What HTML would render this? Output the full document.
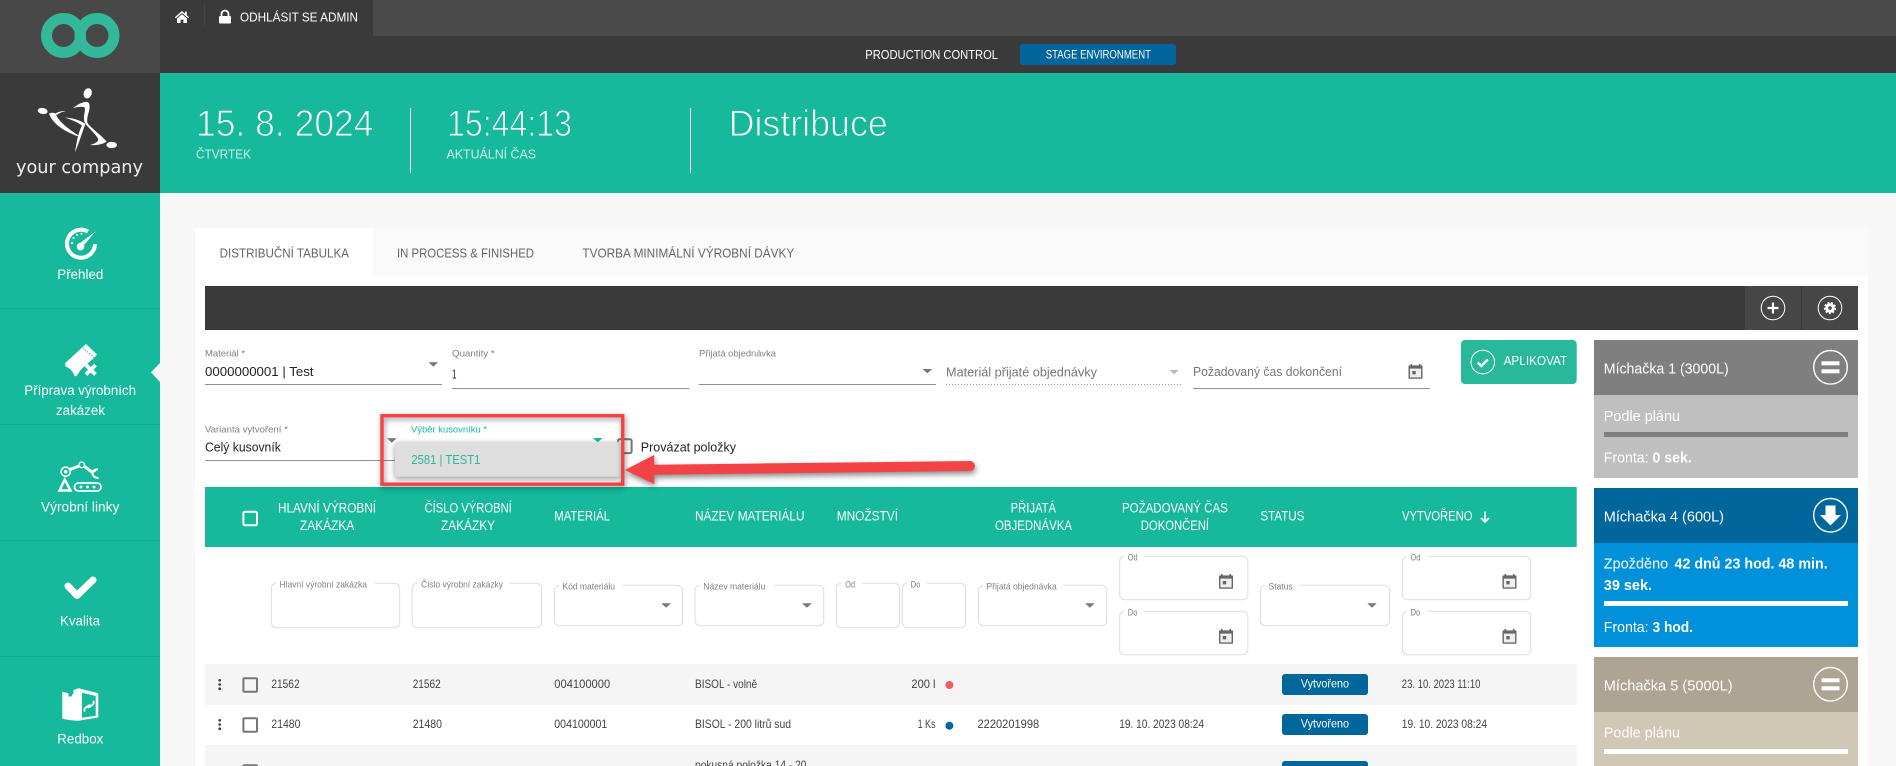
<!DOCTYPE html>
<html lang="cs"><head><meta charset="utf-8"><title>Distribuce</title>
<style>
html,body{margin:0;padding:0;background:#f7f7f7;width:1896px;height:766px;overflow:hidden}
svg{display:block}
text{font-family:"Liberation Sans",sans-serif;white-space:pre}
.w{fill:#fff}
.thin{fill:#fff;stroke:#16b99b;stroke-width:1}
.sub{fill:#cdeee6}
.lb{fill:#808080;font-size:9.5px}
.in{fill:#222;font-size:13px}
.mut{fill:#777;font-size:13px}
.th{fill:#fff;font-size:13.5px}
.td{fill:#444;font-size:12px}
.tab{fill:#666;font-size:12.5px}
.nav{fill:#fff;font-size:13.5px}
.m{fill:#fff;font-size:14.5px}
.b{font-weight:700}
.box{fill:#fff;stroke:#e2e2e2;stroke-width:1.2}
.arr{fill:#777}
.cb{fill:none;stroke:#777;stroke-width:2}
</style></head><body>
<svg xmlns="http://www.w3.org/2000/svg" width="1896" height="766" viewBox="0 0 1896 766">
<defs>
<g id="cal"><path d="M2 0h1.6v1.4h6.8V0H12v1.4h1.2A.8.8 0 0 1 14 2.2V14a.8.8 0 0 1-.8.8H.8A.8.8 0 0 1 0 14V2.2a.8.8 0 0 1 .8-.8H2z" fill="#666"/><rect x="1.4" y="4.6" width="11.2" height="8.8" fill="#eee"/><rect x="3.8" y="7" width="3.4" height="3.4" fill="#666"/></g>
</defs>
<rect width="1896" height="766" fill="#f7f7f7"/>
<!-- top -->
<rect x="0" y="0" width="160" height="73" fill="#484848"/>
<rect x="160" y="0" width="1736" height="36" fill="#4a4a4a"/>
<rect x="160" y="36" width="1736" height="37" fill="#3a3a3a"/>
<rect x="160" y="0" width="213" height="36" fill="#3a3a3a"/>
<circle cx="63.5" cy="35.5" r="17" fill="none" stroke="#33b899" stroke-width="11"/>
<circle cx="97" cy="35.5" r="17" fill="none" stroke="#33b899" stroke-width="11"/>
<path d="M182 11L174.8 17.2l.9 1L182 13l6.300 5.200.9-1L186.800 15.200V11.600h-1.800v2z" fill="#fff"/>
<path d="M177 18.400L182 14.200l5 4.200V23h-3.600v-3.400h-2.800V23H177z" fill="#fff"/>
<rect x="204" y="3" width="1" height="24" fill="#444"/>
<rect x="219" y="16" width="12" height="7.500" rx="1" fill="#fff"/>
<path d="M221.500 17v-3a3.500 3.500 0 0 1 7 0v3" fill="none" stroke="#fff" stroke-width="1.800"/>
<text x="240" y="21.500" font-size="12.500" class="w" textLength="118" lengthAdjust="spacingAndGlyphs">ODHLÁSIT SE ADMIN</text>
<text x="865.300" y="59" font-size="12.500" class="w" textLength="132.700" lengthAdjust="spacingAndGlyphs">PRODUCTION CONTROL</text>
<rect x="1020" y="44" width="156" height="21" rx="2.500" fill="#00669c"/>
<text x="1045.700" y="58.300" font-size="11.500" class="w" textLength="105.300" lengthAdjust="spacingAndGlyphs">STAGE ENVIRONMENT</text>
<!-- brand -->
<rect x="0" y="73" width="160" height="120" fill="#3a3a3a"/>
<rect x="160" y="73" width="1736" height="120" fill="#16b99b"/>
<g fill="#fff">
<ellipse cx="87.700" cy="93.300" rx="4" ry="5.200" transform="rotate(20 87.700 93.300)"/>
<ellipse cx="42.700" cy="111" rx="5" ry="3" transform="rotate(10 42.700 111)"/>
<ellipse cx="111.700" cy="145" rx="5.300" ry="3.100"/>
<path d="M49 113.500C53 125 67 133 81.500 137.500C71 130.500 59 123 55.500 113.500C53 112.500 51 112.500 49 113.500Z"/>
<path d="M73 108C78 104 84 101.500 87.500 102C90 103 90 107 89 111C88 115 86.500 119 87.500 123C92 129 101 135 106.500 141.500C103 144.500 96 145.500 90 145C95.500 143.500 99 141.500 98 138.500C94 132 87 127 84.500 122C83 118 85 112 85 108.500C85 106 79 106.500 73 108Z"/>
<path d="M65 117.500C73 118 81 120.500 85.500 124C82 132 79.500 142 75 152.500C76.500 142 78.500 132 82 125.500C77 122 71 119.500 65 117.500Z"/>
<path d="M55 114C58 111.500 62 111 66 111C62 112 59 113 57 115Z"/>
</g>
<text x="16" y="173" font-size="18" fill="#eee" style="font-family:'DejaVu Sans',sans-serif" textLength="127" lengthAdjust="spacingAndGlyphs">your company</text>
<text x="196" y="136" font-size="37" class="thin" textLength="177.500" lengthAdjust="spacingAndGlyphs">15. 8. 2024</text>
<text x="196" y="158.300" font-size="13" class="sub" textLength="55" lengthAdjust="spacingAndGlyphs">ČTVRTEK</text>
<rect x="410" y="108" width="1" height="65" fill="#fff"/>
<text x="447" y="136" font-size="37" class="thin" textLength="125" lengthAdjust="spacingAndGlyphs">15:44:13</text>
<text x="446.500" y="158.300" font-size="13" class="sub" textLength="89.500" lengthAdjust="spacingAndGlyphs">AKTUÁLNÍ ČAS</text>
<rect x="690" y="108" width="1" height="65" fill="#fff"/>
<text x="728.600" y="136" font-size="37" class="thin" textLength="159.200" lengthAdjust="spacingAndGlyphs">Distribuce</text>
<!-- sidebar -->
<rect x="0" y="193" width="160" height="573" fill="#16b99b"/>
<g fill="#12a98e"><rect y="308" width="160" height="1"/><rect y="424" width="160" height="1"/><rect y="540" width="160" height="1"/><rect y="656" width="160" height="1"/></g>
<polygon points="160,363 151,372.300 160,382" fill="#f7f7f7"/>
<!-- gauge -->
<path d="M88 231.600A14 14 0 1 0 95 244" fill="none" stroke="#fff" stroke-width="4" stroke-linecap="butt"/>
<path d="M96 231L84 245a3.800 3.800 0 1 1-3.500-2.200z" fill="#fff"/>
<g fill="#fff"><circle cx="72" cy="243" r="1.100"/><circle cx="73.500" cy="238" r="1.100"/><circle cx="77" cy="234.800" r="1.100"/><circle cx="81.500" cy="233.800" r="1.100"/></g>
<text x="57.300" y="279" class="nav" textLength="46" lengthAdjust="spacingAndGlyphs">Přehled</text>
<!-- ticket -->
<path d="M65 363.300L80 349.500 86 344l11 10.500-3 3.500-8 7-5 4.500-4.500 6.500-2 .2C73.500 372 70 368 65.500 366.500z" fill="#fff"/>
<path d="M83 347.800L94 357.500" stroke="#16b99b" stroke-width="1" stroke-dasharray="1.500 1.200" fill="none"/>
<path d="M86 365l9.500 9.500M95.500 365L86 374.500" stroke="#16b99b" stroke-width="7" fill="none"/>
<path d="M86 365l9.500 9.500M95.500 365L86 374.500" stroke="#fff" stroke-width="3.800" fill="none"/>
<text x="24.300" y="395" class="nav" textLength="111.700" lengthAdjust="spacingAndGlyphs">Příprava výrobních</text>
<text x="56" y="415" class="nav" textLength="49" lengthAdjust="spacingAndGlyphs">zakázek</text>
<!-- robot -->
<g fill="none" stroke="#fff">
<circle cx="65.700" cy="471.700" r="4.600" stroke-width="1.500"/><circle cx="65.700" cy="471.700" r="1.800" fill="#fff" stroke="none"/>
<circle cx="81.700" cy="464.800" r="2.800" stroke-width="1.300"/>
<path d="M70 469.500L79 466M84.500 466.500L92 472" stroke-width="3"/>
<path d="M98 469.500c-3-.5-6 1.500-5.500 4.500 1 3 3.500 4 6 4M96 470l-3 2" stroke-width="2"/>
<path d="M64.800 479.500L59.500 490.500H70.500z" stroke-width="2.400"/>
<rect x="74.500" y="483" width="26.500" height="8" rx="4" stroke-width="1.800"/>
</g>
<g fill="#fff"><circle cx="81" cy="487" r="1.500"/><circle cx="87.500" cy="487" r="1.500"/><circle cx="94" cy="487" r="1.500"/></g>
<text x="41" y="511.700" class="nav" textLength="78.300" lengthAdjust="spacingAndGlyphs">Výrobní linky</text>
<!-- check -->
<path d="M68 586L77 595.500L93 580" fill="none" stroke="#fff" stroke-width="7" stroke-linecap="round" stroke-linejoin="round"/>
<text x="60" y="625.700" class="nav" textLength="40" lengthAdjust="spacingAndGlyphs">Kvalita</text>
<!-- redbox -->
<path d="M62.300 691.700L68.500 693.300V696.500H71.500L73.500 692.500V690L78.500 688.300L98.300 693.300V717.500L78.500 720.700C72 720.500 67 720 62.300 718.500z" fill="#fff"/>
<path d="M82 692.800L95.700 696V715.800L82 717.800z" fill="#16b99b"/>
<path d="M85 711.500c-1.500-1.500-.5-3.200 1-4.200l2-1.500c1.500-1 3-.5 3.500.5M93 701c1.500 1.500.5 3.200-1 4.200l-2 1.500c-1.500 1-3 .5-3.500-.5" fill="none" stroke="#fff" stroke-width="1.800"/>
<text x="57.300" y="743.300" class="nav" textLength="46" lengthAdjust="spacingAndGlyphs">Redbox</text>

<!-- card -->
<rect x="373" y="228" width="1495" height="48" fill="#fafafa"/>
<rect x="195" y="228" width="178" height="538" fill="#fff"/>
<rect x="195" y="276" width="1673" height="490" fill="#fff"/>
<text x="219.600" y="257.300" class="tab" textLength="129.400" lengthAdjust="spacingAndGlyphs">DISTRIBUČNÍ TABULKA</text>
<text x="397" y="257.300" class="tab" textLength="137" lengthAdjust="spacingAndGlyphs">IN PROCESS &amp; FINISHED</text>
<text x="582.400" y="257.300" class="tab" textLength="211.900" lengthAdjust="spacingAndGlyphs">TVORBA MINIMÁLNÍ VÝROBNÍ DÁVKY</text>
<rect x="205" y="286" width="1653" height="44" fill="#3a3a3a"/>
<rect x="1745" y="286" width="56" height="44" fill="#474747"/>
<rect x="1802" y="286" width="56" height="44" rx="2" fill="#474747"/>
<circle cx="1773" cy="308" r="11.800" fill="none" stroke="#fff" stroke-width="1"/>
<path d="M1773 302.500v11M1767.500 308h11" stroke="#fff" stroke-width="2.200"/>
<circle cx="1830" cy="308" r="11.800" fill="none" stroke="#fff" stroke-width="1"/>
<circle cx="1830" cy="308" r="4.800" fill="#fff"/>
<circle cx="1830" cy="308" r="5.300" fill="none" stroke="#fff" stroke-width="1.600" stroke-dasharray="2 1.700"/>
<circle cx="1830" cy="308" r="1.800" fill="#474747"/>

<!-- form row 1 -->
<text x="205" y="356.700" class="lb" textLength="40" lengthAdjust="spacingAndGlyphs">Materiál *</text>
<text x="205" y="376" class="in" textLength="108.500" lengthAdjust="spacingAndGlyphs">0000000001 | Test</text>
<polygon class="arr" points="428.600,362.300 438,362.300 433.300,366.700"/>
<rect x="205" y="384" width="237" height="1" fill="#8f8f8f"/>
<text x="452" y="356.700" class="lb" textLength="42.700" lengthAdjust="spacingAndGlyphs">Quantity *</text>
<text x="452" y="378.300" class="in" textLength="4.500" lengthAdjust="spacingAndGlyphs">1</text>
<rect x="452" y="388" width="237" height="1" fill="#8f8f8f"/>
<text x="699" y="356.700" class="lb" textLength="77" lengthAdjust="spacingAndGlyphs">Přijatá objednávka</text>
<polygon class="arr" points="922.400,369 932.200,369 927.300,373.300"/>
<rect x="699" y="384" width="237" height="1" fill="#8f8f8f"/>
<text x="946" y="376.700" class="mut" textLength="151" lengthAdjust="spacingAndGlyphs">Materiál přijaté objednávky</text>
<polygon points="1169.400,370 1178.800,370 1174.100,374.300" fill="#bbb"/>
<line x1="946" y1="384.500" x2="1183" y2="384.500" stroke="#999" stroke-width="1" stroke-dasharray="1 2"/>
<text x="1193" y="376" class="mut" textLength="149" lengthAdjust="spacingAndGlyphs">Požadovaný čas dokončení</text>
<use href="#cal" x="1408.500" y="364"/>
<rect x="1193" y="388" width="237" height="1" fill="#8f8f8f"/>
<rect x="1461" y="340" width="115.700" height="44" rx="4" fill="#27b99a"/>
<circle cx="1482.800" cy="362" r="11.800" fill="none" stroke="#fff" stroke-width="1"/>
<path d="M1477.800 362.500l3.500 3.500 6.500-6.500" fill="none" stroke="#fff" stroke-width="2.400"/>
<text x="1503.600" y="365" font-size="13" class="w" textLength="63.600" lengthAdjust="spacingAndGlyphs">APLIKOVAT</text>

<!-- form row 2 -->
<text x="205" y="432.700" class="lb" textLength="82.800" lengthAdjust="spacingAndGlyphs">Varianta vytvoření *</text>
<text x="205" y="451.700" class="in" textLength="75.800" lengthAdjust="spacingAndGlyphs">Celý kusovník</text>
<rect x="205" y="460" width="237" height="1" fill="#8f8f8f"/>
<polygon class="arr" points="387,438.300 396.700,438.300 391.800,442.700"/>
<text x="411" y="432.700" font-size="9.500" fill="#16b99b" textLength="76" lengthAdjust="spacingAndGlyphs">Výběr kusovníku *</text>
<polygon points="593,438 602.500,438 597.700,442.500" fill="#16b99b"/>
<rect x="618" y="439.300" width="13.600" height="13.800" rx="1.500" class="cb"/>
<text x="640.800" y="451.700" class="in" textLength="95.200" lengthAdjust="spacingAndGlyphs">Provázat položky</text>

<!-- table header -->
<rect x="205" y="487" width="1371.700" height="60" fill="#16b99b"/>
<rect x="243.400" y="511.700" width="13.600" height="13.500" rx="1.500" fill="none" stroke="#fff" stroke-width="2"/>
<text x="278" y="512.300" class="th" textLength="98" lengthAdjust="spacingAndGlyphs">HLAVNÍ VÝROBNÍ</text>
<text x="300" y="530" class="th" textLength="54.300" lengthAdjust="spacingAndGlyphs">ZAKÁZKA</text>
<text x="424.500" y="512.300" class="th" textLength="87.300" lengthAdjust="spacingAndGlyphs">ČÍSLO VÝROBNÍ</text>
<text x="441" y="530" class="th" textLength="54" lengthAdjust="spacingAndGlyphs">ZAKÁZKY</text>
<text x="554.300" y="520.500" class="th" textLength="55.700" lengthAdjust="spacingAndGlyphs">MATERIÁL</text>
<text x="695" y="520.500" class="th" textLength="109.500" lengthAdjust="spacingAndGlyphs">NÁZEV MATERIÁLU</text>
<text x="836.700" y="520.500" class="th" textLength="61.300" lengthAdjust="spacingAndGlyphs">MNOŽSTVÍ</text>
<text x="1010.600" y="512.300" class="th" textLength="45.400" lengthAdjust="spacingAndGlyphs">PŘIJATÁ</text>
<text x="995" y="530" class="th" textLength="77" lengthAdjust="spacingAndGlyphs">OBJEDNÁVKA</text>
<text x="1122" y="512.300" class="th" textLength="105.800" lengthAdjust="spacingAndGlyphs">POŽADOVANÝ ČAS</text>
<text x="1140.800" y="530" class="th" textLength="68.200" lengthAdjust="spacingAndGlyphs">DOKONČENÍ</text>
<text x="1260.400" y="520.500" class="th" textLength="44" lengthAdjust="spacingAndGlyphs">STATUS</text>
<text x="1402" y="520.500" class="th" textLength="70.500" lengthAdjust="spacingAndGlyphs">VYTVOŘENO</text>
<path d="M1485 511.500v10M1481 518l4 4 4-4" fill="none" stroke="#fff" stroke-width="1.700"/>

<!-- filters -->
<rect class="box" x="271.400" y="583.300" width="128.200" height="44.400" rx="5"/><rect x="276" y="582" width="99" height="3" fill="#fff"/><text class="lb" x="279.600" y="587.500" textLength="87.400" lengthAdjust="spacingAndGlyphs">Hlavní výrobní zakázka</text>
<rect class="box" x="412.200" y="583.300" width="129.400" height="44.400" rx="5"/><rect x="417" y="582" width="92" height="3" fill="#fff"/><text class="lb" x="421" y="587.500" textLength="82" lengthAdjust="spacingAndGlyphs">Číslo výrobní zakázky</text>
<rect class="box" x="554.300" y="585.300" width="128.100" height="40.400" rx="5"/><rect x="559" y="584" width="63" height="3" fill="#fff"/><text class="lb" x="562.400" y="589.700" textLength="52.600" lengthAdjust="spacingAndGlyphs">Kód materiálu</text>
<polygon class="arr" points="661.200,603.300 671,603.300 666.100,607.700"/>
<rect class="box" x="695" y="585.300" width="128.700" height="40.400" rx="5"/><rect x="700" y="584" width="73" height="3" fill="#fff"/><text class="lb" x="703.300" y="589.700" textLength="62" lengthAdjust="spacingAndGlyphs">Název materiálu</text>
<polygon class="arr" points="802,603.300 811.800,603.300 806.900,607.700"/>
<rect class="box" x="836.300" y="583.300" width="63.300" height="44.400" rx="5"/><rect x="841" y="582" width="21" height="3" fill="#fff"/><text class="lb" x="845.300" y="587.500" textLength="9.700" lengthAdjust="spacingAndGlyphs">Od</text>
<rect class="box" x="902.400" y="583.300" width="63.300" height="44.400" rx="5"/><rect x="907" y="582" width="20" height="3" fill="#fff"/><text class="lb" x="910.600" y="587.500" textLength="9.800" lengthAdjust="spacingAndGlyphs">Do</text>
<rect class="box" x="978.400" y="585.300" width="128.100" height="40.400" rx="5"/><rect x="983" y="584" width="80" height="3" fill="#fff"/><text class="lb" x="986.500" y="589.700" textLength="70.200" lengthAdjust="spacingAndGlyphs">Přijatá objednávka</text>
<polygon class="arr" points="1085,603.300 1094.700,603.300 1089.900,607.700"/>
<rect class="box" x="1119.600" y="556.300" width="128.200" height="43.400" rx="5"/><rect x="1124" y="555" width="20" height="3" fill="#fff"/><text class="lb" x="1127.800" y="560.500" textLength="9.700" lengthAdjust="spacingAndGlyphs">Od</text>
<use href="#cal" x="1219" y="574"/>
<rect class="box" x="1119.600" y="611.300" width="128.200" height="43.400" rx="5"/><rect x="1124" y="610" width="20" height="3" fill="#fff"/><text class="lb" x="1127.800" y="615.500" textLength="9.700" lengthAdjust="spacingAndGlyphs">Do</text>
<use href="#cal" x="1219" y="629"/>
<rect class="box" x="1260.400" y="585.300" width="129.200" height="40.400" rx="5"/><rect x="1265" y="584" width="34" height="3" fill="#fff"/><text class="lb" x="1268.600" y="589.700" textLength="24" lengthAdjust="spacingAndGlyphs">Status</text>
<polygon class="arr" points="1367.200,603.300 1376.700,603.300 1372,607.700"/>
<rect class="box" x="1402.600" y="556.300" width="128.100" height="43.400" rx="5"/><rect x="1407" y="555" width="20" height="3" fill="#fff"/><text class="lb" x="1410.500" y="560.500" textLength="9.800" lengthAdjust="spacingAndGlyphs">Od</text>
<use href="#cal" x="1502.500" y="574"/>
<rect class="box" x="1402.600" y="611.300" width="128.100" height="43.400" rx="5"/><rect x="1407" y="610" width="20" height="3" fill="#fff"/><text class="lb" x="1410.500" y="615.500" textLength="9.800" lengthAdjust="spacingAndGlyphs">Do</text>
<use href="#cal" x="1502.500" y="629"/>

<!-- rows -->
<rect x="205" y="664" width="1371.700" height="41" fill="#f5f5f5"/>
<rect x="205" y="745" width="1371.700" height="21" fill="#f5f5f5"/>
<g fill="#333"><circle cx="219.700" cy="680.300" r="1.300"/><circle cx="219.700" cy="684.500" r="1.300"/><circle cx="219.700" cy="688.700" r="1.300"/><circle cx="219.700" cy="720.300" r="1.300"/><circle cx="219.700" cy="724.500" r="1.300"/><circle cx="219.700" cy="728.700" r="1.300"/></g>
<rect x="243.400" y="678.300" width="13.600" height="13.500" rx="1" class="cb"/>
<rect x="243.400" y="718.300" width="13.600" height="13.500" rx="1" class="cb"/>
<rect x="243.400" y="765.300" width="13.600" height="13.500" rx="1" class="cb"/>
<text class="td" x="271.400" y="688" textLength="28.200" lengthAdjust="spacingAndGlyphs">21562</text>
<text class="td" x="412.700" y="688" textLength="28.100" lengthAdjust="spacingAndGlyphs">21562</text>
<text class="td" x="554.300" y="688" textLength="55.900" lengthAdjust="spacingAndGlyphs">004100000</text>
<text class="td" x="695" y="688" textLength="62.100" lengthAdjust="spacingAndGlyphs">BISOL - volně</text>
<text class="td" x="911.400" y="688" textLength="24.100" lengthAdjust="spacingAndGlyphs">200 l</text>
<circle cx="949.400" cy="685" r="4" fill="#f45b5b"/>
<rect x="1282" y="674" width="86" height="21" rx="3" fill="#00669c"/>
<text x="1300.800" y="687.700" font-size="12" class="w" textLength="48.200" lengthAdjust="spacingAndGlyphs">Vytvořeno</text>
<text class="td" x="1401.800" y="688" textLength="78.600" lengthAdjust="spacingAndGlyphs">23. 10. 2023 11:10</text>
<text class="td" x="271.400" y="728" textLength="29" lengthAdjust="spacingAndGlyphs">21480</text>
<text class="td" x="412.700" y="728" textLength="29.300" lengthAdjust="spacingAndGlyphs">21480</text>
<text class="td" x="554.300" y="728" textLength="53" lengthAdjust="spacingAndGlyphs">004100001</text>
<text class="td" x="695" y="728" textLength="96" lengthAdjust="spacingAndGlyphs">BISOL - 200 litrů sud</text>
<text class="td" x="917.600" y="728" textLength="17.900" lengthAdjust="spacingAndGlyphs">1 Ks</text>
<circle cx="949.400" cy="725.700" r="4" fill="#00669c"/>
<text class="td" x="977.500" y="728" textLength="61.700" lengthAdjust="spacingAndGlyphs">2220201998</text>
<text class="td" x="1119.200" y="728" textLength="84.800" lengthAdjust="spacingAndGlyphs">19. 10. 2023 08:24</text>
<rect x="1282" y="714" width="86" height="21" rx="3" fill="#00669c"/>
<text x="1300.800" y="727.700" font-size="12" class="w" textLength="48.200" lengthAdjust="spacingAndGlyphs">Vytvořeno</text>
<text class="td" x="1401.800" y="728" textLength="85.200" lengthAdjust="spacingAndGlyphs">19. 10. 2023 08:24</text>
<text class="td" x="695" y="769" textLength="111.500" lengthAdjust="spacingAndGlyphs">pokusná položka 14 - 20</text>
<rect x="1282" y="761" width="86" height="21" rx="3" fill="#00669c"/>

<!-- panels -->
<rect x="1594" y="340" width="264" height="55" fill="#7f7f7f"/>
<rect x="1594" y="395" width="264" height="83" fill="#bfbfbf"/>
<text class="m" x="1603.800" y="373.300" textLength="124.900" lengthAdjust="spacingAndGlyphs">Míchačka 1 (3000L)</text>
<circle cx="1830.500" cy="367.300" r="16.800" fill="none" stroke="#fff" stroke-width="1.400"/>
<rect x="1821.500" y="361.300" width="18" height="4" fill="#fff"/><rect x="1821.500" y="369.300" width="18" height="4" fill="#fff"/>
<text class="m" x="1603.800" y="421" textLength="76.200" lengthAdjust="spacingAndGlyphs">Podle plánu</text>
<rect x="1604" y="432" width="244" height="5" fill="#7f7f7f"/>
<text class="m" x="1603.800" y="462.700" textLength="44.800" lengthAdjust="spacingAndGlyphs">Fronta:</text>
<text class="m b" x="1652.500" y="462.700" textLength="39.300" lengthAdjust="spacingAndGlyphs">0 sek.</text>

<rect x="1594" y="488" width="264" height="55" fill="#00669c"/>
<rect x="1594" y="543" width="264" height="104" fill="#0091da"/>
<text class="m" x="1603.800" y="521.300" textLength="120.200" lengthAdjust="spacingAndGlyphs">Míchačka 4 (600L)</text>
<circle cx="1830.500" cy="515.300" r="16.800" fill="none" stroke="#fff" stroke-width="1.400"/>
<path d="M1825.500 505.500H1835.500V515H1841L1830.500 525.500L1820 515H1825.500Z" fill="#fff"/>
<text class="m" x="1603.800" y="568.700" textLength="64.400" lengthAdjust="spacingAndGlyphs">Zpožděno</text>
<text class="m b" x="1674.500" y="568.700" textLength="153.200" lengthAdjust="spacingAndGlyphs">42 dnů 23 hod. 48 min.</text>
<text class="m b" x="1603.800" y="590" textLength="48.200" lengthAdjust="spacingAndGlyphs">39 sek.</text>
<rect x="1604" y="601" width="244" height="5" fill="#fff"/>
<text class="m" x="1603.800" y="632" textLength="44.800" lengthAdjust="spacingAndGlyphs">Fronta:</text>
<text class="m b" x="1652.500" y="632" textLength="40.500" lengthAdjust="spacingAndGlyphs">3 hod.</text>

<rect x="1594" y="657" width="264" height="55" fill="#ada494"/>
<rect x="1594" y="712" width="264" height="54" fill="#d1c7b5"/>
<text class="m" x="1603.800" y="690.300" textLength="128.800" lengthAdjust="spacingAndGlyphs">Míchačka 5 (5000L)</text>
<circle cx="1830.500" cy="684.300" r="16.800" fill="none" stroke="#fff" stroke-width="1.400"/>
<rect x="1821.500" y="678.300" width="18" height="4" fill="#fff"/><rect x="1821.500" y="686.300" width="18" height="4" fill="#fff"/>
<text class="m" x="1603.800" y="737.700" textLength="76.200" lengthAdjust="spacingAndGlyphs">Podle plánu</text>
<rect x="1604" y="749" width="244" height="5" fill="#fff"/>

<!-- annotation -->
<rect x="395" y="441.700" width="226" height="35" rx="3" fill="#dedede" style="filter:drop-shadow(0 2px 3px rgba(0,0,0,.4))"/>
<text x="411.400" y="464" font-size="13" fill="#2ab79c" textLength="69" lengthAdjust="spacingAndGlyphs">2581 | TEST1</text>
<rect x="382" y="415.700" width="240.700" height="68.500" fill="none" stroke="#f44346" stroke-width="3.400" style="filter:drop-shadow(1px 2px 3px rgba(0,0,0,.45))"/>
<path d="M624.800 470L654.200 455V464.700L970 461A5 5 0 0 1 970 471L654.200 474.800V484Z" fill="#f44346" style="filter:drop-shadow(1px 3px 3px rgba(0,0,0,.45))"/>
</svg>
</body></html>
